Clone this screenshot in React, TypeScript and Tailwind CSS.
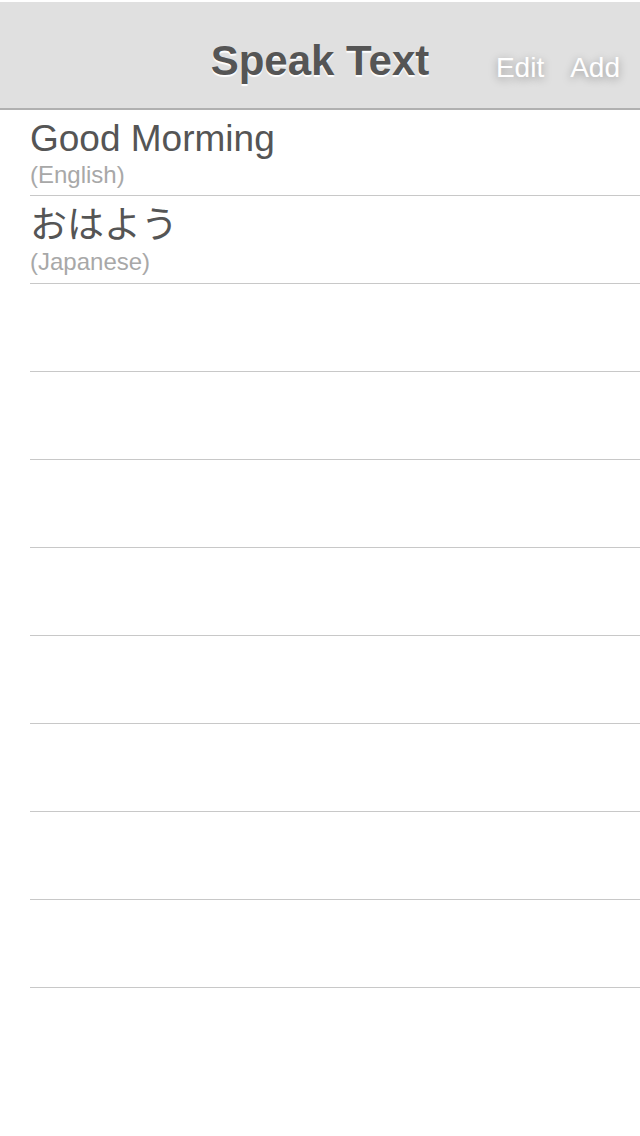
const phrases = [
  { text: 'Good Morming', lang: 'English' },
  { text: 'おはよう', lang: 'Japanese' },
];

const EMPTY_ROWS = 8;

function PhraseRow({ text, lang, first }: { text?: string; lang?: string; first?: boolean }) {
  return (
    <li
      className={`ml-[30px] border-b border-[#c8c8c8] ${first ? 'h-[86px] pt-[10px]' : 'h-[88px] pt-[11px]'}`}
    >
      {text && (
        <>
          <p className="text-[37px] leading-none text-[#555]">{text}</p>
          <p className="mt-[6px] text-[24px] leading-none text-[#a8a8a8]">({lang})</p>
        </>
      )}
    </li>
  );
}

export default function App() {
  return (
    <div className="min-h-[1136px] bg-white pt-[2px] font-['Liberation_Sans','Noto_Sans_CJK_JP',sans-serif]">
      <header className="grid h-[108px] grid-cols-[1fr_auto_1fr] border-b-2 border-[#b0b0b0] bg-[#e0e0e0]">
        <div />
        <h1 className="pt-[38px] text-[42px] font-bold leading-none text-[#555] [text-shadow:0_2px_1px_#fff]">
          Speak Text
        </h1>
        <div className="flex items-start justify-end gap-[26px] pr-[20px] pt-[52px]">
          <button className="text-[28px] leading-none text-white [text-shadow:0_2px_8px_rgba(0,0,0,0.35)]">
            Edit
          </button>
          <button className="text-[28px] leading-none text-white [text-shadow:0_2px_8px_rgba(0,0,0,0.35)]">
            Add
          </button>
        </div>
      </header>
      <ul>
        {phrases.map((p, i) => (
          <PhraseRow key={p.text} text={p.text} lang={p.lang} first={i === 0} />
        ))}
        {Array.from({ length: EMPTY_ROWS }).map((_, i) => (
          <PhraseRow key={`empty-${i}`} />
        ))}
      </ul>
    </div>
  );
}
